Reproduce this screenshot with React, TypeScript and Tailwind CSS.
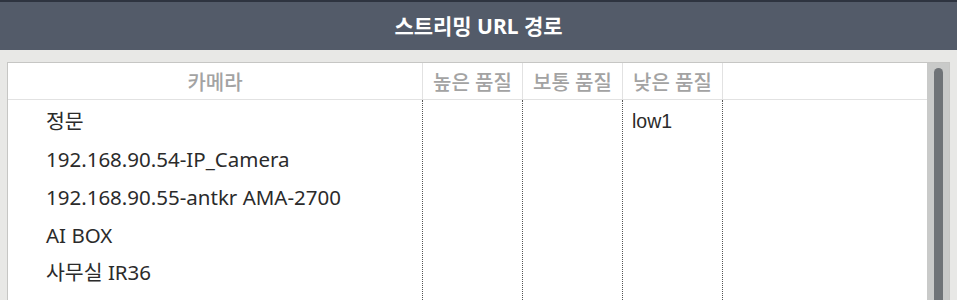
import React from "react";

const rows = ["정문", "192.168.90.54-IP_Camera", "192.168.90.55-antkr AMA-2700", "AI BOX", "사무실 IR36"];

export default function App() {
  const font = { fontFamily: '"Noto Sans", "Noto Sans CJK KR", sans-serif' };
  return (
    <div className="w-[957px] h-[300px] overflow-hidden bg-[#e8e8e6] flex flex-col" style={font}>
      <div className="h-[50px] shrink-0 bg-[#535b69] border-t-2 border-[#2e3440] flex items-center justify-center">
        <span className="text-white font-bold text-[21px] leading-none">스트리밍 URL 경로</span>
      </div>
      <div className="flex-1 pt-[12px] pl-[7px] pr-[7px] flex">
        <div className="flex-1 flex border border-[#c6c6c4] border-b-0">
          <div className="flex-1 bg-white flex flex-col">
            <div className="h-[37px] shrink-0 flex border-b border-[#e2e2e2] text-[#a3a3a3] text-[20px] font-medium">
              <div className="w-[414px] flex items-center justify-center pt-[3px]">카메라</div>
              <div className="w-[100px] border-l border-[#e2e2e2] flex items-center justify-center pt-[3px]">높은 품질</div>
              <div className="w-[100px] border-l border-[#e2e2e2] flex items-center justify-center pt-[3px]">보통 품질</div>
              <div className="w-[100px] border-l border-[#e2e2e2] flex items-center justify-center pt-[3px]">낮은 품질</div>
              <div className="flex-1 border-l border-[#e2e2e2]"></div>
            </div>
            <div className="flex-1 flex text-[#2b2b2b] text-[20.5px]">
              <div className="w-[414px] pt-[3px]">
                {rows.map((r) => (
                  <div key={r} className="h-[37.7px] flex items-center pl-[38px] whitespace-nowrap">{r}</div>
                ))}
              </div>
              <div className="w-[100px] border-l border-dotted border-[#555]"></div>
              <div className="w-[100px] border-l border-dotted border-[#555]"></div>
              <div className="w-[100px] border-l border-dotted border-[#555] pt-[3px]">
                <div className="h-[37.7px] flex items-center pl-[9px] text-[19.5px]" style={{ fontFamily: '"Liberation Sans", Arial, sans-serif' }}>low1</div>
              </div>
              <div className="flex-1 border-l border-dotted border-[#555]"></div>
            </div>
          </div>
          <div className="w-[22px] bg-[#c9cac9] flex justify-center pt-[5px]">
            <div className="w-[9px] bg-[#6f7377] rounded-t-full"></div>
          </div>
        </div>
      </div>
    </div>
  );
}
